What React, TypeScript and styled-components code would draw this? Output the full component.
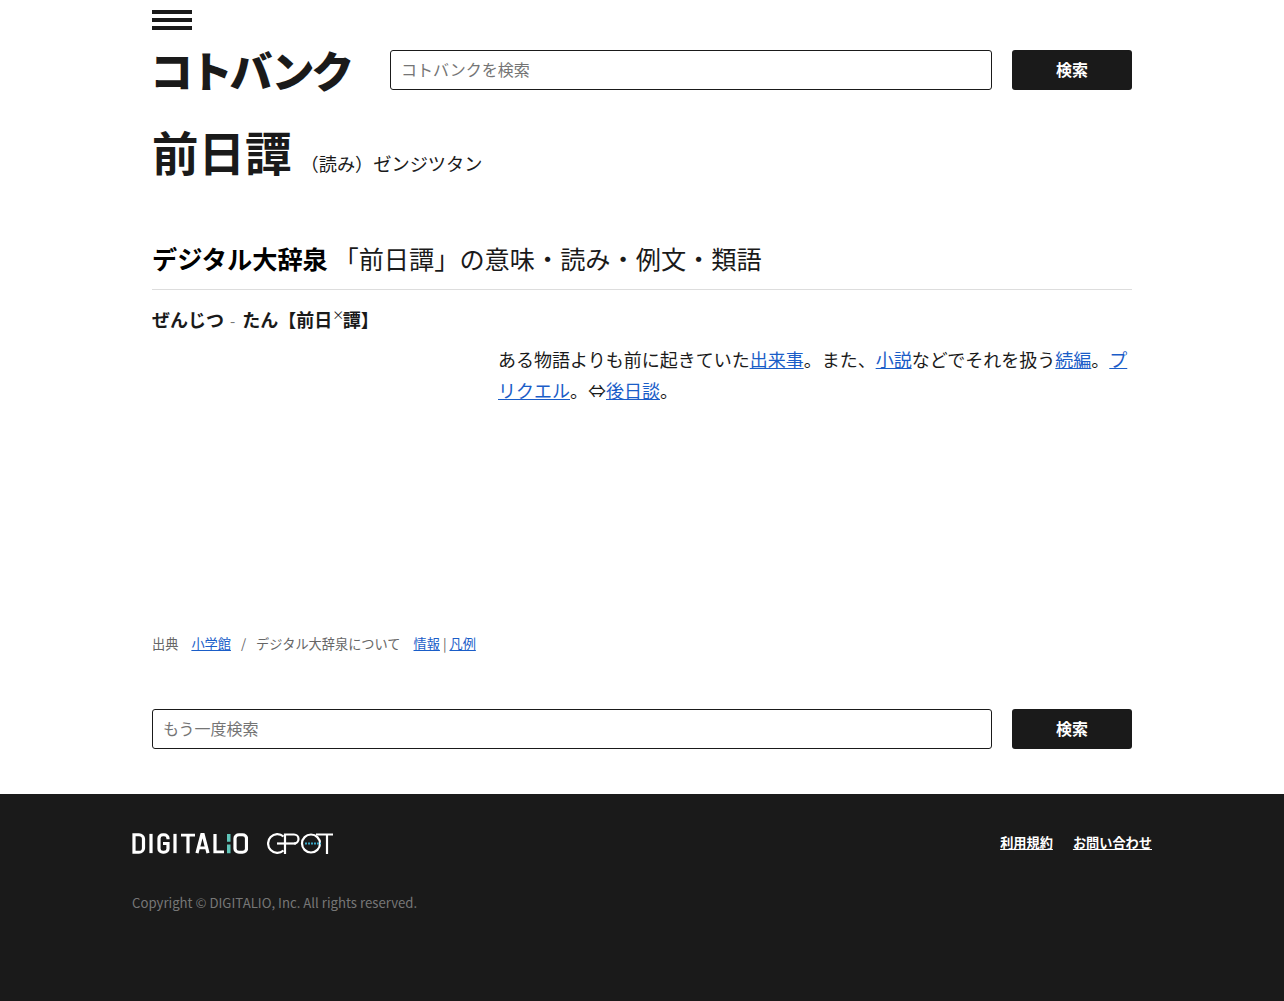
import React from "react";
import styled, { createGlobalStyle } from "styled-components";

const Global = createGlobalStyle`
  html, body { margin: 0; padding: 0; background: #fff; }
  body { font-family: "Noto Sans CJK JP", "Noto Sans", sans-serif; color: #1a1a1a; }
`;
const Page = styled.div`display: flex; flex-direction: column; min-height: 1001px;`;
const Main = styled.main`width: 980px; margin: 0 auto; display: flex; flex-direction: column;`;
const Burger = styled.div`
  width: 40px; height: 20px; margin-top: 10px;
  display: flex; flex-direction: column; justify-content: space-between;
  span { display: block; height: 4px; background: #1a1a1a; }
`;
const HeaderRow = styled.div`display: flex; align-items: center; margin-top: 20px; height: 40px;`;
const Logo = styled.div`
  width: 238px; flex: none; font-size: 43px; font-weight: 900; line-height: 38px; height: 40px; white-space: nowrap; color: #1a1a1a;
  letter-spacing: -3.2px; text-indent: -2px;
`;
const SearchForm = styled.form`display: flex; gap: 20px; flex: 1;`;
const SearchInput = styled.input`
  flex: 1; min-width: 0; height: 40px; box-sizing: border-box; border: 1px solid #1a1a1a; border-radius: 3px;
  padding: 0 10px 2px; font: 16px "Noto Sans CJK JP", sans-serif; background: #fff; outline: none;
  &::placeholder { color: #757575; opacity: 1; }
`;
const SearchButton = styled.button`
  width: 120px; height: 40px; flex: none; border: 0; border-radius: 3px; background: #1a1a1a; color: #fff;
  padding: 0 0 2px; font: 700 16px "Noto Sans CJK JP", sans-serif;
`;
const TitleRow = styled.div`display: flex; align-items: baseline; margin-top: 29px; height: 64px;`;
const Title = styled.h1`margin: 0; font-size: 46.5px; font-weight: 700; line-height: 64px; letter-spacing: 0;`;
const Reading = styled.span`font-size: 18.2px; margin-left: 9px; color: #1a1a1a;`;
const DictHead = styled.h2`
  margin: 51px 0 0; padding-bottom: 10px; height: 45px; box-sizing: content-box;
  border-bottom: 1px solid #ddd; font-size: 25.2px; line-height: 48px; font-weight: 400; color: #1a1a1a; white-space: nowrap;
  b { font-weight: 700; color: #000; }
`;
const Entry = styled.div`margin-top: 15px; font-size: 18px; font-weight: 700; line-height: 28px; color: #1a1a1a; white-space: nowrap;`;
const Hyphen = styled.span`font-weight: 400; color: #777; margin: 0 7px 0 6px; font-size: 15px;`;
const Sup = styled.sup`font-size: 12px; font-weight: 400; line-height: 0; vertical-align: 7px; letter-spacing: -1.5px; color: #1a1a1a;`;
const Body = styled.p`
  margin: 9px 0 0 346px; width: 634px; height: 289px; font-size: 18px; line-height: 31px; color: #1a1a1a;
`;
const TextLink = styled.a`color: #1a5dc8; text-decoration: underline;`;
const Source = styled.div`display: flex; align-items: center; height: 20px; font-size: 13.2px; color: #666; white-space: nowrap;`;
const SourceLabel = styled.span`margin-right: 13px;`;
const Slash = styled.span`margin: 0 10px;`;
const Gap = styled.span`margin-right: 13px;`;
const Pipe = styled.span`margin: 0 3px;`;
const BottomForm = styled(SearchForm)`margin-top: 56px;`;
const Footer = styled.footer`background: #1a1a1a; flex: 1; margin-top: 45px; height: 207px;`;
const FooterInner = styled.div`width: 1020px; margin: 0 auto; padding-top: 36px;`;
const FooterTop = styled.div`display: flex; justify-content: space-between; align-items: center; height: 26px;`;
const Logos = styled.div`display: flex; align-items: center; gap: 19px;`;
const FooterLinks = styled.div`display: flex; gap: 20px; padding-bottom: 2px;`;
const FooterLink = styled.a`color: #fff; font-size: 13.2px; font-weight: 700; text-decoration: underline;`;
const Copy = styled.div`margin-top: 37px; font-size: 13.2px; line-height: 20px; color: #777;`;

const DigitalioLogo = () => (
  <svg width="116" height="21" viewBox="0 0 116 24" preserveAspectRatio="none" aria-label="DIGITALIO" role="img">
    <g fill="none" stroke="#fff" strokeWidth="3.2">
      <path d="M2 2h5a4.5 4.5 0 0 1 4.5 4.500v11A4.500 4.500 0 0 1 7 22H2z" />
      <path d="M19 1v22" />
      <path d="M36 7V6a4 4 0 0 0-4-4h-1a4 4 0 0 0-4 4v12a4 4 0 0 0 4 4h1a4 4 0 0 0 4-4v-6h-5" />
      <path d="M43 1v22" />
      <path d="M49 2.500h14M56 2.500V23" />
      <path d="M65 23l5-22h1l5 22M67 17h7" />
      <path d="M83 1v20.500h9" />
      <path d="M103 6a4 4 0 0 1 4-4h3.500a4 4 0 0 1 4 4v12a4 4 0 0 1-4 4H107a4 4 0 0 1-4-4z" />
    </g>
    <path d="M95 1h3.500v9H95zM95 13h3.500v10H95z" fill="#5fc4b8" />
  </svg>
);
const CpotLogo = () => (
  <svg width="66" height="21" viewBox="0 0 66 21" aria-label="CPOT" role="img">
    <g fill="none" stroke="#fff" strokeWidth="2.2">
      <path d="M16.500 3.500a9.300 9.300 0 1 0 0 14" />
      <path d="M10 10.500h19" />
      <path d="M18 21V1.500h9a4.500 4.500 0 0 1 0 9" />
      <circle cx="44" cy="10.500" r="9" />
      <path d="M49 1.500h17M60 1.500V21" />
    </g>
    <path d="M38 10.500h16" stroke="#3aa6c4" strokeWidth="2" strokeDasharray="2 1" />
  </svg>
);

export default function App() {
  return (
    <Page>
      <Global />
      <Main>
        <Burger><span /><span /><span /></Burger>
        <HeaderRow>
          <Logo>コトバンク</Logo>
          <SearchForm>
            <SearchInput placeholder="コトバンクを検索" />
            <SearchButton type="button">検索</SearchButton>
          </SearchForm>
        </HeaderRow>
        <TitleRow>
          <Title>前日譚</Title>
          <Reading>（読み）ゼンジツタン</Reading>
        </TitleRow>
        <DictHead><b>デジタル大辞泉</b> 「前日譚」の意味・読み・例文・類語</DictHead>
        <Entry>ぜんじつ<Hyphen>-</Hyphen>たん【前日<Sup>×</Sup>譚】</Entry>
        <Body>
          ある物語よりも前に起きていた<TextLink href="#">出来事</TextLink>。また、<TextLink href="#">小説</TextLink>などでそれを扱う<TextLink href="#">続編</TextLink>。<TextLink href="#">プリクエル</TextLink>。⇔<TextLink href="#">後日談</TextLink>。
        </Body>
        <Source>
          <SourceLabel>出典</SourceLabel>
          <TextLink href="#">小学館</TextLink>
          <Slash>/</Slash>
          <Gap>デジタル大辞泉について</Gap>
          <TextLink href="#">情報</TextLink>
          <Pipe>|</Pipe>
          <TextLink href="#">凡例</TextLink>
        </Source>
        <BottomForm>
          <SearchInput placeholder="もう一度検索" />
          <SearchButton type="button">検索</SearchButton>
        </BottomForm>
      </Main>
      <Footer>
        <FooterInner>
          <FooterTop>
            <Logos><DigitalioLogo /><CpotLogo /></Logos>
            <FooterLinks>
              <FooterLink href="#">利用規約</FooterLink>
              <FooterLink href="#">お問い合わせ</FooterLink>
            </FooterLinks>
          </FooterTop>
          <Copy>Copyright © DIGITALIO, Inc. All rights reserved.</Copy>
        </FooterInner>
      </Footer>
    </Page>
  );
}
